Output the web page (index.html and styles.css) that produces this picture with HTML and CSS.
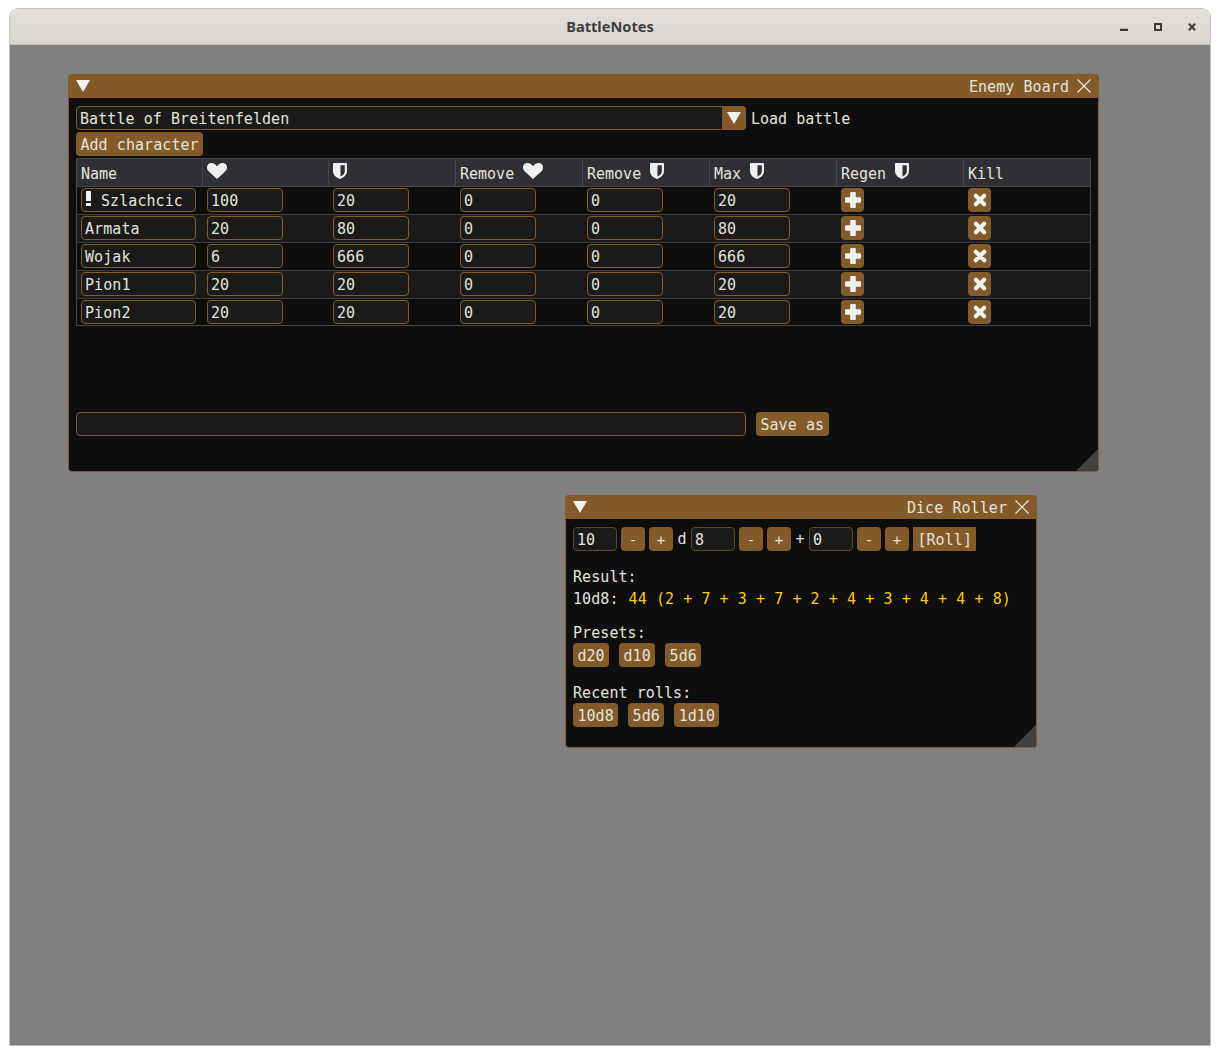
FILE: index.html
```html
<!DOCTYPE html>
<html lang="en">
  <head>
    <meta charset="UTF-8" />
    <meta name="viewport" content="width=device-width, initial-scale=1.0" />
    <title>BattleNotes</title>
    <link rel="stylesheet" href="styles.css">
  </head>
  <body>
    <!-- Shared icons -->
    <svg class="icon-defs" width="0" height="0">
      <symbol id="i-heart" viewBox="0 0 20 16">
        <path d="M10 16 1.6 8.2C-.6 6-.5 2.8 1.5 1.100 3.600-.6 6.600-.3 8.400 1.600L10 3.300l1.600-1.700C13.400-.3 16.400-.6 18.500 1.100c2 1.700 2.100 4.900-.1 7.100z" fill="currentColor" />
      </symbol>
      <symbol id="i-shield" viewBox="0 0 14 16">
        <path fill-rule="evenodd" d="M1 0h12c.6 0 1 .4 1 1v7c0 3.500-2.500 6.300-7 8-4.500-1.700-7-4.500-7-8V1c0-.6.4-1 1-1zm6.500 2.200v11.300C10.300 12.200 11.800 10.400 11.800 8V2.200z" fill="currentColor" />
      </symbol>
      <symbol id="i-plus" viewBox="0 0 16 16">
        <path d="M6 0h4c.5 0 .8.300.8.800v4.400h4.400c.5 0 .8.300.8.800v4c0 .5-.3.800-.8.800h-4.400v4.400c0 .5-.3.800-.8.800H6c-.5 0-.8-.3-.8-.8v-4.400H.8c-.5 0-.8-.3-.8-.8V6c0-.5.3-.8.800-.8h4.400V.8c0-.5.300-.8.800-.8z" fill="currentColor" />
      </symbol>
      <symbol id="i-kill" viewBox="0 0 16 16">
        <path d="M3.800 3.800l8.400 8.400m0-8.400-8.400 8.400" fill="none" stroke="currentColor" stroke-width="4.200" stroke-linecap="round" />
      </symbol>
    </svg>

    <div class="app">
      <div class="app-title">
        <span class="app-name">BattleNotes</span>
        <div class="app-controls">
          <svg width="8" height="8" viewBox="0 0 8 8"><path d="M0 5.700h8V8H0z" fill="#3a3a3a" /></svg>
          <svg width="8" height="8" viewBox="0 0 8 8"><path d="M1 1h6v6H1z" fill="none" stroke="#3a3a3a" stroke-width="2" /></svg>
          <svg width="8" height="8" viewBox="0 0 8 8"><path d="M.8.800l6.400 6.400m0-6.400L.8 7.200" fill="none" stroke="#3a3a3a" stroke-width="2" /></svg>
        </div>
      </div>

      <div class="desktop">
        <!-- Enemy board window -->
        <section class="win win-board">
          <header class="win-bar">
            <span class="tri"></span>
            <span class="win-name">Enemy Board</span>
            <svg class="win-close" viewBox="0 0 14 14"><path d="M.5.500l13 13m0-13-13 13" fill="none" stroke="#eee" stroke-width="1.100" /></svg>
          </header>
          <div class="win-body">
            <div class="line">
              <div class="combo">
                <span class="combo-text">Battle of Breitenfelden</span>
                <span class="combo-arrow"><span class="tri"></span></span>
              </div>
              <span class="combo-label">Load battle</span>
            </div>
            <button class="btn btn-add">Add character</button>

            <div class="table">
              <div class="tr th">
                <div class="td">Name</div>
                <div class="td"><svg class="i-heart"><use href="#i-heart" /></svg></div>
                <div class="td"><svg class="i-shield"><use href="#i-shield" /></svg></div>
                <div class="td">Remove <svg class="i-heart"><use href="#i-heart" /></svg></div>
                <div class="td">Remove <svg class="i-shield"><use href="#i-shield" /></svg></div>
                <div class="td">Max <svg class="i-shield"><use href="#i-shield" /></svg></div>
                <div class="td">Regen <svg class="i-shield"><use href="#i-shield" /></svg></div>
                <div class="td">Kill</div>
              </div>

              <div class="tr">
                <div class="td"><div class="field field-name"><span class="bang"></span>Szlachcic</div></div>
                <div class="td"><div class="field">100</div></div>
                <div class="td"><div class="field">20</div></div>
                <div class="td"><div class="field">0</div></div>
                <div class="td"><div class="field">0</div></div>
                <div class="td"><div class="field">20</div></div>
                <div class="td"><button class="btn-icon"><svg><use href="#i-plus" /></svg></button></div>
                <div class="td"><button class="btn-icon"><svg><use href="#i-kill" /></svg></button></div>
              </div>
              <div class="tr alt">
                <div class="td"><div class="field field-name">Armata</div></div>
                <div class="td"><div class="field">20</div></div>
                <div class="td"><div class="field">80</div></div>
                <div class="td"><div class="field">0</div></div>
                <div class="td"><div class="field">0</div></div>
                <div class="td"><div class="field">80</div></div>
                <div class="td"><button class="btn-icon"><svg><use href="#i-plus" /></svg></button></div>
                <div class="td"><button class="btn-icon"><svg><use href="#i-kill" /></svg></button></div>
              </div>
              <div class="tr">
                <div class="td"><div class="field field-name">Wojak</div></div>
                <div class="td"><div class="field">6</div></div>
                <div class="td"><div class="field">666</div></div>
                <div class="td"><div class="field">0</div></div>
                <div class="td"><div class="field">0</div></div>
                <div class="td"><div class="field">666</div></div>
                <div class="td"><button class="btn-icon"><svg><use href="#i-plus" /></svg></button></div>
                <div class="td"><button class="btn-icon"><svg><use href="#i-kill" /></svg></button></div>
              </div>
              <div class="tr alt">
                <div class="td"><div class="field field-name">Pion1</div></div>
                <div class="td"><div class="field">20</div></div>
                <div class="td"><div class="field">20</div></div>
                <div class="td"><div class="field">0</div></div>
                <div class="td"><div class="field">0</div></div>
                <div class="td"><div class="field">20</div></div>
                <div class="td"><button class="btn-icon"><svg><use href="#i-plus" /></svg></button></div>
                <div class="td"><button class="btn-icon"><svg><use href="#i-kill" /></svg></button></div>
              </div>
              <div class="tr">
                <div class="td"><div class="field field-name">Pion2</div></div>
                <div class="td"><div class="field">20</div></div>
                <div class="td"><div class="field">20</div></div>
                <div class="td"><div class="field">0</div></div>
                <div class="td"><div class="field">0</div></div>
                <div class="td"><div class="field">20</div></div>
                <div class="td"><button class="btn-icon"><svg><use href="#i-plus" /></svg></button></div>
                <div class="td"><button class="btn-icon"><svg><use href="#i-kill" /></svg></button></div>
              </div>
            </div>

            <div class="line save-line">
              <div class="field field-save"></div>
              <button class="btn">Save as</button>
            </div>
          </div>
          <div class="grip"></div>
        </section>

        <!-- Dice roller window -->
        <section class="win win-dice">
          <header class="win-bar">
            <span class="tri"></span>
            <span class="win-name">Dice Roller</span>
            <svg class="win-close" viewBox="0 0 14 14"><path d="M.5.500l13 13m0-13-13 13" fill="none" stroke="#eee" stroke-width="1.100" /></svg>
          </header>
          <div class="win-body">
            <div class="line dice-line">
              <div class="field field-dice">10</div>
              <button class="btn btn-step">-</button>
              <button class="btn btn-step">+</button>
              <span class="dice-op">d</span>
              <div class="field field-dice">8</div>
              <button class="btn btn-step">-</button>
              <button class="btn btn-step">+</button>
              <span class="dice-op">+</span>
              <div class="field field-dice">0</div>
              <button class="btn btn-step">-</button>
              <button class="btn btn-step">+</button>
              <button class="btn btn-roll">[Roll]</button>
            </div>

            <div class="text text-first">Result:</div>
            <div class="text">10d8: <span class="result">44 (2 + 7 + 3 + 7 + 2 + 4 + 3 + 4 + 4 + 8)</span></div>

            <div class="text text-head">Presets:</div>
            <div class="chips">
              <button class="btn">d20</button>
              <button class="btn">d10</button>
              <button class="btn">5d6</button>
            </div>

            <div class="text text-head2">Recent rolls:</div>
            <div class="chips">
              <button class="btn">10d8</button>
              <button class="btn">5d6</button>
              <button class="btn">1d10</button>
            </div>
          </div>
          <div class="grip"></div>
        </section>
      </div>
    </div>
  </body>
</html>
```

FILE: styles.css
```css
/* Page */
body {
  margin: 0;
  background-color: #fff;
  color: #e4e4dc;
  font-family: "DejaVu Sans Mono", "Liberation Mono", monospace;
  font-size: 15px;
  letter-spacing: 0.07px;
  line-height: 22px;
}

.icon-defs {
  position: absolute;
}

/* Desktop app frame */
.app {
  display: flex;
  flex-direction: column;
  width: 1202px;
  height: 1038px;
  margin: 8px 0 0 9px;
  box-sizing: border-box;
  border: 1px solid #c4c4c4;
  border-bottom-color: #b8b8b8;
  border-radius: 9px 9px 0 0;
  overflow: hidden;
}

.app-title {
  position: relative;
  display: flex;
  align-items: center;
  justify-content: center;
  flex: none;
  height: 36px;
  box-sizing: border-box;
  background: linear-gradient(#e2dfdb, #dad7d2);
  border-bottom: 1px solid #bdb9b1;
}

.app-name {
  margin-top: -2px;
  font-family: "Noto Sans", sans-serif;
  font-size: 14.6px;
  font-weight: 700;
  letter-spacing: 0;
  color: #3d3d3d;
}

.app-controls {
  position: absolute;
  right: 14px;
  top: 14px;
  display: flex;
  gap: 26px;
}

.app-controls svg {
  display: block;
}

.desktop {
  position: relative;
  flex: 1;
  background-color: #808080;
}

/* Floating windows */
.win {
  position: absolute;
  display: flex;
  flex-direction: column;
  box-sizing: border-box;
  background-color: #0e0e0e;
  border: 1px solid #825b28;
  border-radius: 4px;
}

.win-board {
  left: 58px;
  top: 29px;
  width: 1031px;
  height: 398px;
}

.win-dice {
  left: 555px;
  top: 450px;
  width: 472px;
  height: 253px;
}

.win-bar {
  display: flex;
  align-items: center;
  flex: none;
  height: 24px;
  margin: -1px -1px 0;
  padding: 0 8px 0 7px;
  border-radius: 4px 4px 0 0;
  background-color: #825b28;
}

.win-name {
  margin: 2px 0 0 auto;
}

.win-close {
  width: 14px;
  height: 14px;
  margin-left: 8px;
}

.tri {
  display: block;
  width: 14px;
  height: 12px;
  clip-path: polygon(0 0, 100% 0, 50% 100%);
  background-color: #f2f2f2;
}

.win-bar .tri {
  margin-left: 1px;
}

.win-body {
  padding: 8px 7px;
}

/* Bottom right resize corner */
.grip {
  position: absolute;
  right: 0;
  bottom: 0;
  width: 22px;
  height: 22px;
  clip-path: polygon(100% 0, 100% 100%, 0 100%);
  background-color: #414141;
}

.line {
  display: flex;
  align-items: center;
}

/* Combo box */
.combo {
  display: flex;
  width: 670px;
  height: 24px;
  box-sizing: border-box;
  background-color: #1a1a1a;
  border: 1px solid #825b28;
  border-radius: 4px;
}

.combo-text {
  flex: 1;
  padding-left: 3px;
  line-height: 24px;
}

.combo-arrow {
  display: flex;
  align-items: center;
  justify-content: center;
  width: 24px;
  margin: -1px -1px -1px 0;
  border-radius: 0 4px 4px 0;
  background-color: #825b28;
}

.combo-label {
  height: 24px;
  margin-left: 5px;
  letter-spacing: 0;
  line-height: 26px;
}

/* Buttons */
.btn {
  display: block;
  height: 24px;
  padding: 2px 4.4px 0;
  border: 0;
  border-radius: 4px;
  background-color: #825b28;
  color: inherit;
  font: inherit;
  letter-spacing: inherit;
}

.btn-add {
  margin-top: 2px;
}

.btn-step {
  width: 24px;
  padding: 2px 0 0;
  font-size: 14px;
}

.btn-roll {
  border-radius: 0;
}

.btn-icon {
  display: flex;
  align-items: center;
  justify-content: center;
  width: 23px;
  height: 24px;
  padding: 0;
  border: 0;
  border-radius: 4px;
  background-color: #825b28;
  color: #f0f0f0;
}

.btn-icon svg {
  width: 16px;
  height: 16px;
  margin-top: -1px;
}

/* Table */
.table {
  margin-top: 2px;
  border: 1px solid #45454c;
  border-width: 0 1px 1px;
}

.tr {
  display: grid;
  grid-template-columns: 126px 126px repeat(5, 127px) 126px;
  height: 28px;
  box-sizing: border-box;
  border-bottom: 1px solid #3c3c42;
}

.tr:last-child {
  height: 26px;
  border-bottom: 0;
}

.alt {
  background-color: #1a1a1a;
}

.th {
  height: 29px;
  background-color: #303034;
  border-top: 1px solid #45454c;
  border-bottom-color: #45454c;
  letter-spacing: 0;
}

.th .td {
  display: flex;
  align-items: center;
  gap: 9px;
  height: 27px;
  box-sizing: border-box;
  padding-top: 2px;
  border-right: 1px solid #45454c;
}

.th .td:last-child {
  border-right: 0;
}

.td {
  min-width: 0;
  padding-left: 4px;
}

/* Inputs */
.field {
  width: 76px;
  height: 24px;
  box-sizing: border-box;
  padding-left: 3px;
  background-color: #1a1a1a;
  border: 1px solid #825b28;
  border-radius: 4px;
  line-height: 24px;
}

.tr .field,
.tr .btn-icon {
  margin-top: 1px;
}

.field-name {
  display: flex;
  align-items: flex-start;
  width: 115px;
}

.bang {
  width: 5px;
  height: 15px;
  margin: 2px 10px 0 1px;
  background: linear-gradient(#f0f0f0 10px, transparent 10px, transparent 12px, #f0f0f0 12px);
}

.field-save {
  width: 670px;
}

.save-line {
  gap: 10px;
  margin-top: 86px;
}

.field-dice {
  width: 44px;
  border-color: #62481f;
}

/* Dice roller */
.dice-line {
  gap: 4px;
}

.dice-op {
  width: 10px;
  line-height: 24px;
  text-align: center;
}

.text {
  height: 22px;
  line-height: 24px;
}

.text-first {
  margin-top: 14px;
}

.text-head {
  margin-top: 12px;
}

.text-head2 {
  margin-top: 14px;
}

.result {
  margin-left: 1px;
  color: #ffcc00;
}

.chips {
  display: flex;
  gap: 10px;
}

/* Header icons */
.i-heart {
  display: block;
  flex: none;
  width: 20px;
  height: 16px;
  margin-top: -6px;
  color: #f0f0f0;
}

.i-shield {
  display: block;
  flex: none;
  width: 14px;
  height: 16px;
  margin-top: -6px;
  color: #f0f0f0;
}
```
